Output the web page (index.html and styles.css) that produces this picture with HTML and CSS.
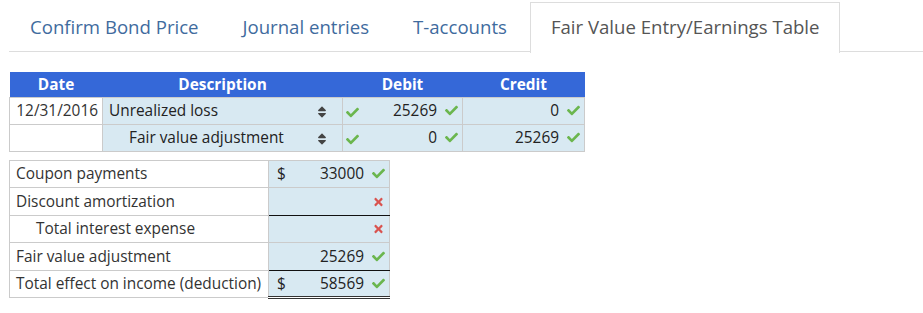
FILE: index.html
```html
<!DOCTYPE html>
<html>
<head>
    <title>Fair Value Entry</title>
    <meta charset="UTF-8">
    <link rel="stylesheet" href="styles.css">
</head>
<body>
    <div class="page">
        <ul class="tabs">
            <li class="tab"><a>Confirm Bond Price</a></li>
            <li class="tab"><a>Journal entries</a></li>
            <li class="tab"><a>T-accounts</a></li>
            <li class="tab active"><a>Fair Value Entry/Earnings Table</a></li>
        </ul>

        <table class="journal">
            <colgroup>
                <col style="width: 93px">
                <col style="width: 240px">
                <col style="width: 120px">
                <col style="width: 122px">
            </colgroup>
            <thead>
                <tr>
                    <th>Date</th>
                    <th>Description</th>
                    <th>Debit</th>
                    <th>Credit</th>
                </tr>
            </thead>
            <tbody>
                <tr>
                    <td class="date">12/31/2016</td>
                    <td class="input desc">
                        <span>Unrealized loss</span>
                        <svg class="sort" viewBox="0 0 320 512"><path d="M41 288h238c21.4 0 32.1 25.9 17 41L177 448c-9.4 9.4-24.6 9.4-33.9 0L24 329c-15.1-15.1-4.4-41 17-41zm255-105L177 64c-9.4-9.4-24.6-9.4-33.9 0L24 183c-15.1 15.1-4.4 41 17 41h238c21.4 0 32.1-25.9 17-41z"/></svg>
                    </td>
                    <td class="input amount">
                        <svg class="check lead" viewBox="0 0 512 512"><path d="M173.9 439.4l-166.4-166.4c-10-10-10-26.2 0-36.2l36.2-36.2c10-10 26.2-10 36.2 0L192 312.7 432.1 72.6c10-10 26.2-10 36.2 0l36.2 36.2c10 10 10 26.2 0 36.2l-294.4 294.4c-10 10-26.2 10-36.2 0z"/></svg>
                        <span class="num">25269</span>
                        <svg class="check" viewBox="0 0 512 512"><path d="M173.9 439.4l-166.4-166.4c-10-10-10-26.2 0-36.2l36.2-36.2c10-10 26.2-10 36.2 0L192 312.7 432.1 72.6c10-10 26.2-10 36.2 0l36.2 36.2c10 10 10 26.2 0 36.2l-294.4 294.4c-10 10-26.2 10-36.2 0z"/></svg>
                    </td>
                    <td class="input amount">
                        <span class="num">0</span>
                        <svg class="check" viewBox="0 0 512 512"><path d="M173.9 439.4l-166.4-166.4c-10-10-10-26.2 0-36.2l36.2-36.2c10-10 26.2-10 36.2 0L192 312.7 432.1 72.6c10-10 26.2-10 36.2 0l36.2 36.2c10 10 10 26.2 0 36.2l-294.4 294.4c-10 10-26.2 10-36.2 0z"/></svg>
                    </td>
                </tr>
                <tr>
                    <td class="date"></td>
                    <td class="input desc indent">
                        <span>Fair value adjustment</span>
                        <svg class="sort" viewBox="0 0 320 512"><path d="M41 288h238c21.4 0 32.1 25.9 17 41L177 448c-9.4 9.4-24.6 9.4-33.9 0L24 329c-15.1-15.1-4.4-41 17-41zm255-105L177 64c-9.4-9.4-24.6-9.4-33.9 0L24 183c-15.1 15.1-4.4 41 17 41h238c21.4 0 32.1-25.9 17-41z"/></svg>
                    </td>
                    <td class="input amount">
                        <svg class="check lead" viewBox="0 0 512 512"><path d="M173.9 439.4l-166.4-166.4c-10-10-10-26.2 0-36.2l36.2-36.2c10-10 26.2-10 36.2 0L192 312.7 432.1 72.6c10-10 26.2-10 36.2 0l36.2 36.2c10 10 10 26.2 0 36.2l-294.4 294.4c-10 10-26.2 10-36.2 0z"/></svg>
                        <span class="num">0</span>
                        <svg class="check" viewBox="0 0 512 512"><path d="M173.9 439.4l-166.4-166.4c-10-10-10-26.2 0-36.2l36.2-36.2c10-10 26.2-10 36.2 0L192 312.7 432.1 72.6c10-10 26.2-10 36.2 0l36.2 36.2c10 10 10 26.2 0 36.2l-294.4 294.4c-10 10-26.2 10-36.2 0z"/></svg>
                    </td>
                    <td class="input amount">
                        <span class="num">25269</span>
                        <svg class="check" viewBox="0 0 512 512"><path d="M173.9 439.4l-166.4-166.4c-10-10-10-26.2 0-36.2l36.2-36.2c10-10 26.2-10 36.2 0L192 312.7 432.1 72.6c10-10 26.2-10 36.2 0l36.2 36.2c10 10 10 26.2 0 36.2l-294.4 294.4c-10 10-26.2 10-36.2 0z"/></svg>
                    </td>
                </tr>
            </tbody>
        </table>

        <table class="earnings">
            <colgroup>
                <col style="width: 259px">
                <col style="width: 121px">
            </colgroup>
            <tr>
                <td class="label">Coupon payments</td>
                <td class="input value">
                    <span class="dollar">$</span>
                    <span class="num">33000</span>
                    <svg class="check" viewBox="0 0 512 512"><path d="M173.9 439.4l-166.4-166.4c-10-10-10-26.2 0-36.2l36.2-36.2c10-10 26.2-10 36.2 0L192 312.7 432.1 72.6c10-10 26.2-10 36.2 0l36.2 36.2c10 10 10 26.2 0 36.2l-294.4 294.4c-10 10-26.2 10-36.2 0z"/></svg>
                </td>
            </tr>
            <tr>
                <td class="label">Discount amortization</td>
                <td class="input value underline">
                    <span class="num"></span>
                    <svg class="cross" viewBox="0 0 352 512"><path d="M242.7 256l100.1-100.1c12.3-12.3 12.3-32.2 0-44.5l-22.2-22.2c-12.3-12.3-32.2-12.3-44.5 0L176 189.3 75.9 89.2c-12.3-12.3-32.2-12.3-44.5 0L9.2 111.5c-12.3 12.3-12.3 32.2 0 44.5L109.3 256 9.2 356.1c-12.3 12.3-12.3 32.2 0 44.5l22.2 22.2c12.3 12.3 32.2 12.3 44.5 0L176 322.7l100.1 100.1c12.3 12.3 32.2 12.3 44.5 0l22.2-22.2c12.3-12.3 12.3-32.2 0-44.5L242.7 256z"/></svg>
                </td>
            </tr>
            <tr>
                <td class="label indent">Total interest expense</td>
                <td class="input value">
                    <span class="num"></span>
                    <svg class="cross" viewBox="0 0 352 512"><path d="M242.7 256l100.1-100.1c12.3-12.3 12.3-32.2 0-44.5l-22.2-22.2c-12.3-12.3-32.2-12.3-44.5 0L176 189.3 75.9 89.2c-12.3-12.3-32.2-12.3-44.5 0L9.2 111.5c-12.3 12.3-12.3 32.2 0 44.5L109.3 256 9.2 356.1c-12.3 12.3-12.3 32.2 0 44.5l22.2 22.2c12.3 12.3 32.2 12.3 44.5 0L176 322.7l100.1 100.1c12.3 12.3 32.2 12.3 44.5 0l22.2-22.2c12.3-12.3 12.3-32.2 0-44.5L242.7 256z"/></svg>
                </td>
            </tr>
            <tr>
                <td class="label">Fair value adjustment</td>
                <td class="input value underline">
                    <span class="num">25269</span>
                    <svg class="check" viewBox="0 0 512 512"><path d="M173.9 439.4l-166.4-166.4c-10-10-10-26.2 0-36.2l36.2-36.2c10-10 26.2-10 36.2 0L192 312.7 432.1 72.6c10-10 26.2-10 36.2 0l36.2 36.2c10 10 10 26.2 0 36.2l-294.4 294.4c-10 10-26.2 10-36.2 0z"/></svg>
                </td>
            </tr>
            <tr>
                <td class="label">Total effect on income (deduction)</td>
                <td class="input value total">
                    <span class="dollar">$</span>
                    <span class="num">58569</span>
                    <svg class="check" viewBox="0 0 512 512"><path d="M173.9 439.4l-166.4-166.4c-10-10-10-26.2 0-36.2l36.2-36.2c10-10 26.2-10 36.2 0L192 312.7 432.1 72.6c10-10 26.2-10 36.2 0l36.2 36.2c10 10 10 26.2 0 36.2l-294.4 294.4c-10 10-26.2 10-36.2 0z"/></svg>
                </td>
            </tr>
        </table>
    </div>
</body>
</html>
```

FILE: styles.css
```css
* {
    margin: 0;
    padding: 0;
    box-sizing: border-box;
}

body {
    font-family: 'Open Sans', 'Noto Sans', sans-serif;
    color: #222;
    background: #fff;
    padding: 2px 0 0 9px;
}

.tabs {
    list-style: none;
    display: flex;
    border-bottom: 1px solid #ddd;
    height: 50px;
}

.tab {
    margin-bottom: -1px;
    margin-right: 2px;
}

.tab a {
    display: block;
    height: 50px;
    line-height: 47px;
    padding: 0 20px;
    font-size: 18.6px;
    color: #3f6b9e;
    border: 1px solid transparent;
    border-bottom: none;
}

.tab.active a {
    color: #555;
    background: #fff;
    border-color: #ddd;
    height: 51px;
}

table {
    border-collapse: collapse;
    table-layout: fixed;
    font-size: 15.4px;
}

.journal {
    width: 575px;
    margin-top: 20px;
}

.journal th {
    background: #3568d8;
    color: #fff;
    font-weight: 700;
    height: 25px;
    padding: 0;
    text-align: center;
}

td {
    border: 1px solid #cbcbcb;
    padding: 0 5px;
    height: 27px;
    white-space: nowrap;
}

td.input {
    background: #d8e9f2;
}

.journal .date {
    text-align: right;
    padding-right: 4px;
    color: #333;
}

.desc {
    position: relative;
    padding-left: 6px;
}

.desc.indent span {
    padding-left: 20px;
}

.sort {
    position: absolute;
    right: 15px;
    top: 7px;
    width: 10px;
    height: 14px;
    fill: #444;
}

.amount,
.value {
    text-align: right;
    padding-right: 4px;
}

.check,
.cross {
    display: inline-block;
    vertical-align: -1px;
    margin-left: 4px;
}

.check {
    width: 13px;
    height: 13px;
    fill: #6bb64e;
}

.cross {
    width: 9px;
    height: 12px;
    fill: #d9534f;
    margin-right: 2px;
}

.check.lead {
    float: left;
    margin: 6px 0 0 -2px;
}

.earnings {
    width: 380px;
    margin-top: 8px;
}

.earnings td {
    height: 27.5px;
}

.earnings .label {
    padding-left: 6px;
    color: #333;
}

.earnings .label.indent {
    padding-left: 26px;
}

.value {
    position: relative;
}

.dollar {
    float: left;
    margin-left: 3px;
}

.underline {
    border-bottom: 1px solid #111;
}

.total {
    border-bottom: 3px double #333;
}
```
